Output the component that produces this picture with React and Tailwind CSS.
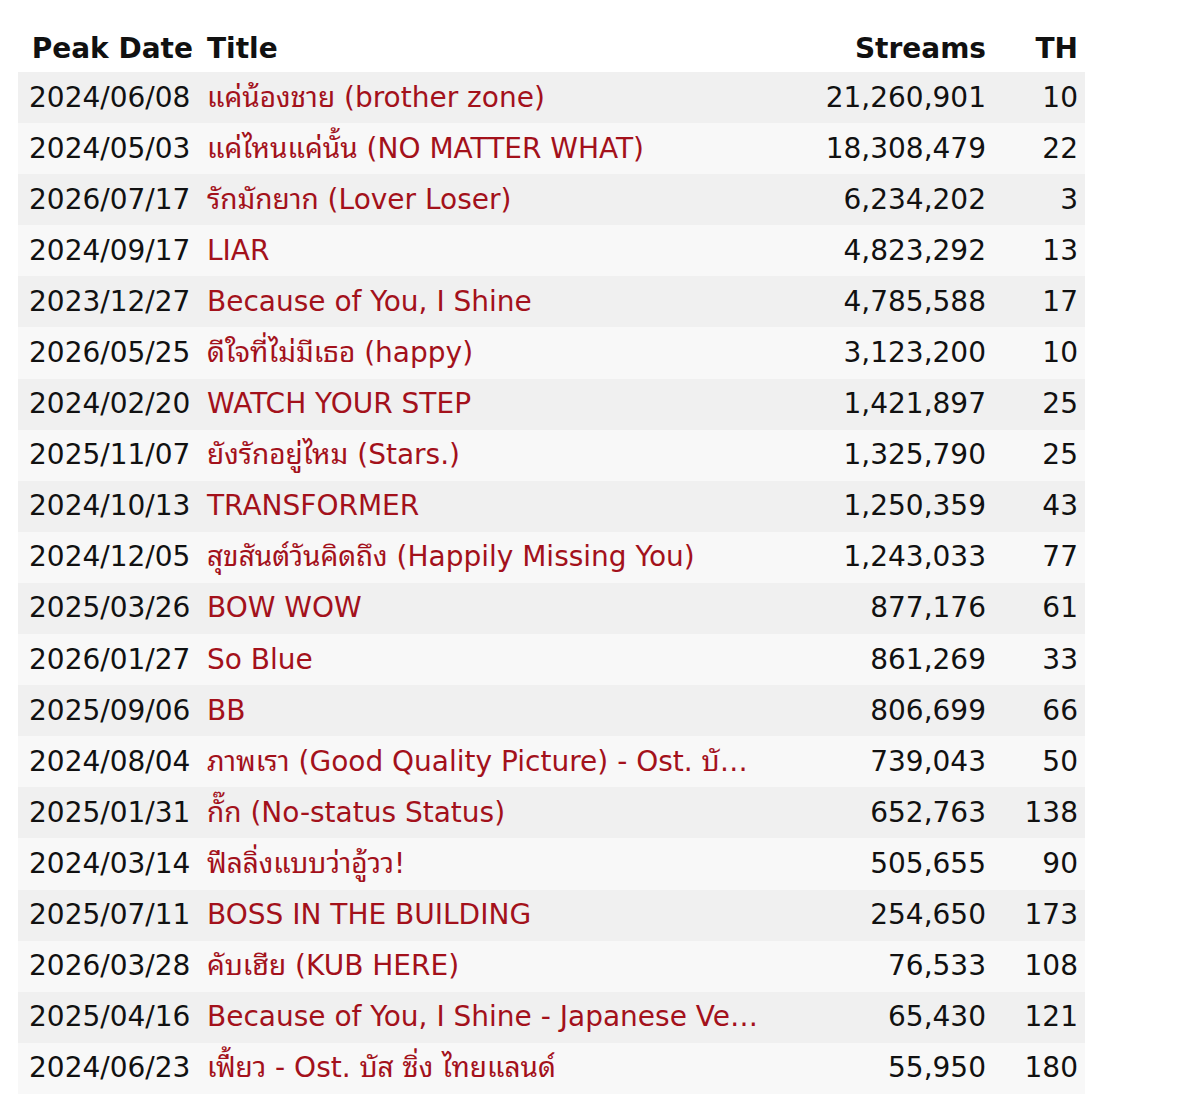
import React from 'react';

const rows = [
  ['2024/06/08', 'แค่น้องชาย (brother zone)', '21,260,901', '10'],
  ['2024/05/03', 'แค่ไหนแค่นั้น (NO MATTER WHAT)', '18,308,479', '22'],
  ['2026/07/17', 'รักมักยาก (Lover Loser)', '6,234,202', '3'],
  ['2024/09/17', 'LIAR', '4,823,292', '13'],
  ['2023/12/27', 'Because of You, I Shine', '4,785,588', '17'],
  ['2026/05/25', 'ดีใจที่ไม่มีเธอ (happy)', '3,123,200', '10'],
  ['2024/02/20', 'WATCH YOUR STEP', '1,421,897', '25'],
  ['2025/11/07', 'ยังรักอยู่ไหม (Stars.)', '1,325,790', '25'],
  ['2024/10/13', 'TRANSFORMER', '1,250,359', '43'],
  ['2024/12/05', 'สุขสันต์วันคิดถึง (Happily Missing You)', '1,243,033', '77'],
  ['2025/03/26', 'BOW WOW', '877,176', '61'],
  ['2026/01/27', 'So Blue', '861,269', '33'],
  ['2025/09/06', 'BB', '806,699', '66'],
  ['2024/08/04', 'ภาพเรา (Good Quality Picture) - Ost. บัส ซิ่ง ไทยแลนด์', '739,043', '50'],
  ['2025/01/31', 'กั๊ก (No-status Status)', '652,763', '138'],
  ['2024/03/14', 'ฟีลลิ่งแบบว่าอู้วว!', '505,655', '90'],
  ['2025/07/11', 'BOSS IN THE BUILDING', '254,650', '173'],
  ['2026/03/28', 'คับเฮีย (KUB HERE)', '76,533', '108'],
  ['2025/04/16', 'Because of You, I Shine - Japanese Version', '65,430', '121'],
  ['2024/06/23', 'เฟี้ยว - Ost. บัส ซิ่ง ไทยแลนด์', '55,950', '180'],
];

export default function App() {
  return (
    <div className="min-h-[1118px] bg-white pt-[22px] pl-[18px] font-['DejaVu_Sans','Noto_Sans_Thai_Looped','Noto_Sans_Thai','Noto_Sans',sans-serif] text-[28px] text-[#111]">
      <table className="table-fixed border-collapse w-[1067px]">
        <colgroup>
          <col className="w-[182px]" />
          <col className="w-[570px]" />
          <col className="w-[223px]" />
          <col className="w-[92px]" />
        </colgroup>
        <thead>
          <tr className="h-[50px]">
            <th className="text-right pr-[7px] pt-[4px] font-bold">Peak Date</th>
            <th className="text-left pl-[7px] pt-[4px] font-bold">Title</th>
            <th className="text-right pr-[7px] pt-[4px] font-bold">Streams</th>
            <th className="text-right pr-[7px] pt-[4px] font-bold">TH</th>
          </tr>
        </thead>
        <tbody>
          {rows.map((r, i) => (
            <tr key={i} className={`h-[51.1px] ${i % 2 === 0 ? 'bg-[#f0f0f0]' : 'bg-[#f8f8f8]'}`}>
              <td className="pl-[11px] whitespace-nowrap">{r[0]}</td>
              <td className="pl-[7px] pr-[12px] whitespace-nowrap overflow-hidden text-ellipsis text-[#a3111b]">{r[1]}</td>
              <td className="text-right pr-[7px] whitespace-nowrap">{r[2]}</td>
              <td className="text-right pr-[7px] whitespace-nowrap">{r[3]}</td>
            </tr>
          ))}
        </tbody>
      </table>
    </div>
  );
}
